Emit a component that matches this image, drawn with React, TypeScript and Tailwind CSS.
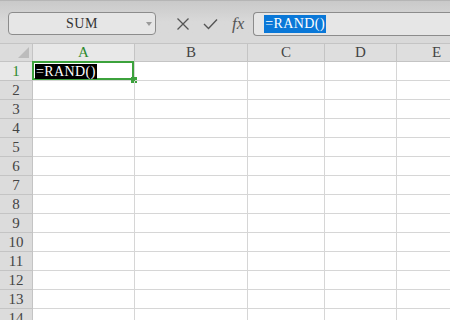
import React from 'react';

const cols = [
  { label: 'A', width: 'w-[102px]', active: true },
  { label: 'B', width: 'w-[113px]', active: false },
  { label: 'C', width: 'w-[77px]', active: false },
  { label: 'D', width: 'w-[72px]', active: false },
  { label: 'E', width: 'w-[80px]', active: false },
];

const rows = Array.from({ length: 14 }, (_, i) => i + 1);

const serif = { fontFamily: '"Liberation Serif", "DejaVu Serif", serif' };

const Toolbar: React.FC = () => (
  <div className="h-[43px] bg-gradient-to-b from-[#c9c9c9] via-[#d9d9d9] to-[#d9d9d9] border-t border-[#b5b5b5] flex items-start pt-[11px] pl-[8px] shrink-0">
    <div className="relative w-[148px] h-[23px] rounded-[4px] border border-[#8c8c8c] bg-[#e6e6e6] flex items-center justify-center">
      <span className="text-[14px] text-[#333] tracking-[0.5px]" style={serif}>SUM</span>
      <div className="absolute right-[3px] top-[9px] w-0 h-0 border-l-[3px] border-r-[3px] border-t-[4px] border-l-transparent border-r-transparent border-t-[#9a9a9a]" />
    </div>
    <div className="flex items-center h-[23px] ml-[20px] gap-[13px] text-[#555]">
      <svg width="14" height="14" viewBox="0 0 14 14" fill="none" stroke="#555" strokeWidth="1.3">
        <path d="M1.5 1.5 L12.5 12.5 M12.5 1.5 L1.5 12.5" />
      </svg>
      <svg width="15" height="12" viewBox="0 0 15 12" fill="none" stroke="#555" strokeWidth="1.4">
        <path d="M1 6 L5.5 10.5 L14 1.5" />
      </svg>
      <span className="italic text-[17px] leading-none text-[#555] ml-[1px]" style={serif}>
        fx
      </span>
    </div>
    <div className="ml-[9px] flex-1 h-[24px] rounded-l-[4px] border border-r-0 border-[#8c8c8c] bg-[#e6e6e6] flex items-center pl-[10px]">
      <span className="bg-[#0a78d8] text-white text-[14px] leading-[18px] tracking-[0.4px] px-[1px]" style={serif}>
        =RAND()
      </span>
    </div>
  </div>
);

const App: React.FC = () => (
  <div className="w-[450px] h-[320px] overflow-hidden bg-white flex flex-col">
    <Toolbar />
    <div className="flex flex-col">
      <div className="flex h-[19px] border-t border-[#c4c4c4]">
        <div className="relative w-[33px] h-full bg-[#dcdcdc] border-r border-b border-[#c4c4c4] shrink-0">
          <svg className="absolute right-[3px] bottom-[3px]" width="11" height="11" viewBox="0 0 11 11">
            <path d="M11 0 L11 11 L0 11 Z" fill="#bcbcbc" />
          </svg>
        </div>
        {cols.map(c => (
          <div
            key={c.label}
            className={`${c.width} shrink-0 h-full border-r border-b border-[#c4c4c4] flex items-center justify-center text-[15px] ${
              c.active ? 'bg-[#e8e8e8] text-[#2f8a2f]' : 'bg-[#dedede] text-[#444]'
            }`}
            style={serif}
          >
            {c.label}
          </div>
        ))}
      </div>
      {rows.map(r => (
        <div key={r} className="flex h-[19px] shrink-0">
          <div
            className={`w-[33px] shrink-0 h-full border-r border-b border-[#c4c4c4] flex items-center justify-center text-[15px] ${
              r === 1 ? 'bg-[#e8e8e8] text-[#2f8a2f]' : 'bg-[#dcdcdc] text-[#444]'
            }`}
            style={serif}
          >
            {r}
          </div>
          {cols.map(c => (
            <div key={c.label} className={`${c.width} shrink-0 h-full border-r border-b border-[#d6d6d6] relative`}>
              {r === 1 && c.label === 'A' && (
                <>
                  <div className="absolute -left-[1px] -top-[1px] right-0 bottom-0 border-2 border-[#3ca23c]" />
                  <div className="absolute -right-[3px] -bottom-[3px] w-[6px] h-[6px] bg-[#3ca23c]" />
                  <div className="absolute left-[2px] top-[2px] h-[15px] flex items-center">
                    <span className="bg-black text-white text-[14px] leading-[15px] tracking-[0.4px] px-[1px]" style={serif}>
                      =RAND()
                    </span>
                  </div>
                </>
              )}
            </div>
          ))}
        </div>
      ))}
    </div>
  </div>
);

export default App;
